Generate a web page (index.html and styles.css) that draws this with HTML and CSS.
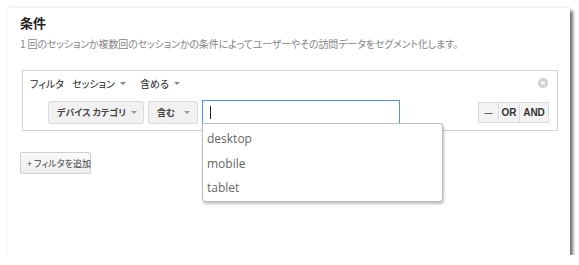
FILE: index.html
```html
<!DOCTYPE html>
<html lang="ja">
<head>
<meta charset="utf-8">
<link rel="stylesheet" href="styles.css">
</head>
<body>
<div class="card">
  <h2 class="title">条件</h2>
  <p class="desc">1 回のセッションか複数回のセッションかの条件によってユーザーやその訪問データをセグメント化します。</p>
  <div class="filter">
    <div class="row1">
      <span class="lbl">フィルタ</span>
      <span class="dd">セッション <i class="caret"></i></span>
      <span class="dd">含める <i class="caret"></i></span>
      <span class="close"><svg width="10" height="10" viewBox="0 0 10 10"><circle cx="5" cy="5" r="5" fill="#cfcfcf"/><path d="M3.2 3.2 L6.8 6.8 M6.8 3.2 L3.2 6.8" stroke="#fff" stroke-width="1.4"/></svg></span>
    </div>
    <div class="row2">
      <span class="btn wide">デバイス カテゴリ <i class="caret"></i></span>
      <span class="btn narrow">含む <i class="caret"></i></span>
      <div class="inputwrap">
        <div class="input"><span class="cursor"></span></div>
        <ul class="menu">
          <li>desktop</li>
          <li>mobile</li>
          <li>tablet</li>
        </ul>
      </div>
      <div class="ops">
        <span class="op">—</span><span class="op">OR</span><span class="op">AND</span>
      </div>
    </div>
  </div>
  <span class="add">+ フィルタを追加</span>
</div>
</body>
</html>
```
FILE: styles.css
```css
* { box-sizing: border-box; }
body {
  margin: 0;
  background: #fff;
  font-family: "Open Sans", "Noto Sans CJK JP", sans-serif;
  color: #333;
}
.card {
  margin: 8px 0 0 8px;
  width: 562px;
  height: 247px;
  background: #fff;
  box-shadow: 3px 3px 3px rgba(0,0,0,0.55), 0 -1px 3px rgba(0,0,0,0.08);
  padding: 5px 12px 0 12px;
}
.title, .desc, .row1, .btn, .add {
  font-family: "Noto Sans CJK JP", sans-serif;
  font-feature-settings: "palt";
}
.title {
  margin: 0;
  font-size: 13px;
  font-weight: bold;
  color: #222;
  line-height: 20px;
}
.desc {
  margin: 3px 0 0 0;
  font-size: 10px;
  color: #858585;
  line-height: 16px;
  letter-spacing: -0.15px;
  white-space: nowrap;
}
.filter {
  margin: 18px 0 0 2px;
  width: 536px;
  height: 61px;
  border: 1px solid #d4d4d4;
  padding: 0 7px;
}
.row1 {
  display: flex;
  align-items: center;
  height: 24px;
  font-size: 10px;
  color: #222;
  white-space: nowrap;
}
.lbl { margin-right: 8px; }
.dd { display: inline-flex; align-items: center; margin-right: 14px; }
.caret {
  display: inline-block;
  width: 0; height: 0;
  border-left: 3px solid transparent;
  border-right: 3px solid transparent;
  border-top: 3px solid #888;
  margin-left: 5px;
}
.close { margin-left: auto; margin-right: 2px; display: flex; }
.row2 {
  display: flex;
  align-items: center;
  padding-left: 18px;
  margin-top: 5px;
}
.btn {
  display: inline-flex;
  align-items: center;
  justify-content: space-between;
  height: 23px;
  border: 1px solid #dcdcdc;
  background: #f1f1f1;
  border-radius: 2px;
  font-size: 9px;
  font-weight: bold;
  color: #444;
  padding: 0 7px 0 8px;
  margin-right: 4px;
  white-space: nowrap;
}
.btn.wide { width: 96px; }
.btn.narrow { width: 50px; }
.btn .caret { border-top-color: #999; }
.inputwrap { position: relative; }
.input {
  width: 198px;
  height: 24px;
  border: 1px solid #4d90fe;
  background: #fff;
  display: flex;
  align-items: center;
  padding-left: 7px;
}
.cursor { width: 1px; height: 13px; background: #222; }
.menu {
  position: absolute;
  left: 0;
  top: 23px;
  width: 241px;
  height: 79px;
  margin: 0;
  padding: 3px 0 0 0;
  list-style: none;
  background: #fff;
  border: 1px solid #bdbdbd;
  border-radius: 0 3px 4px 4px;
  box-shadow: 1px 2px 3px rgba(0,0,0,0.25);
  z-index: 2;
}
.menu li {
  font-size: 12px;
  color: #666;
  padding-left: 4px;
  height: 24.5px;
  line-height: 24px;
}
.ops {
  margin-left: auto;
  margin-right: 1px;
  display: flex;
}
.op {
  height: 21px;
  border: 1px solid #dcdcdc;
  margin-left: -1px;
  background: #f3f3f3;
  font-family: "Liberation Sans", sans-serif;
  font-weight: bold;
  font-size: 10px;
  color: #333;
  display: flex;
  align-items: center;
  justify-content: center;
}
.op:first-child { width: 21px; margin-left: 0; font-size: 8px; }
.op:nth-child(2) { width: 22px; }
.op:nth-child(3) { width: 30px; }
.add {
  display: flex;
  align-items: center;
  margin-top: 21px;
  height: 22px;
  width: 71px;
  border: 1px solid #d0d0d0;
  border-radius: 2px;
  background: linear-gradient(#fafafa, #eeeeee);
  font-size: 9px;
  color: #444;
  padding-left: 6px;
  white-space: nowrap;
}
```
